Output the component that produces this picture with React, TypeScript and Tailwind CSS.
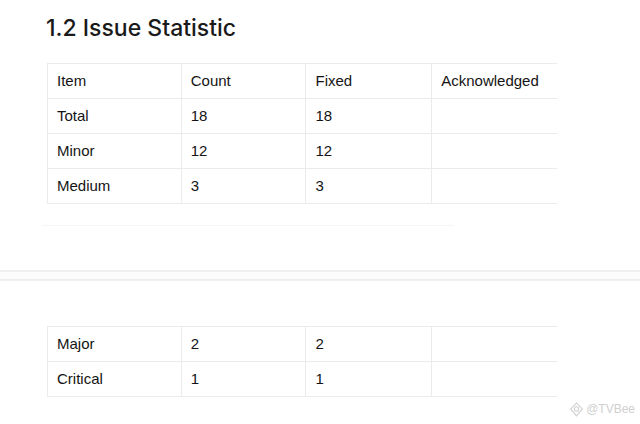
import React from "react";

const font = { fontFamily: '"Helvetica Neue", "Liberation Sans", Arial, sans-serif' };

const cols = ["w-[134px]", "w-[125px]", "w-[126px]", "w-[125px]"];

function Row({ cells }: { cells: string[] }) {
  return (
    <div className="flex">
      {cells.map((c, i) => (
        <div
          key={i}
          className={`${cols[i]} h-[35px] border-b border-[#ebebeb] ${i < 3 ? "border-r" : ""} flex items-center pl-[9px] text-[15px] text-[#141414]`}
        >
          {c}
        </div>
      ))}
    </div>
  );
}

function Table({ rows }: { rows: string[][] }) {
  return (
    <div className="w-[510px] border-l border-t border-[#ebebeb]">
      {rows.map((r, i) => (
        <Row key={i} cells={r} />
      ))}
    </div>
  );
}

export default function App() {
  return (
    <div className="relative w-[640px] h-[424px] bg-white overflow-hidden" style={font}>
      <div className="pl-[46px] pt-[12px]">
        <h1
          className="text-[23px] leading-8 font-medium text-[#1a1a1a]"
          style={{ fontFamily: 'Inter, "Liberation Sans", sans-serif' }}
        >
          1.2 Issue Statistic
        </h1>
      </div>
      <div className="pl-[47px] mt-[19px]">
        <Table
          rows={[
            ["Item", "Count", "Fixed", "Acknowledged"],
            ["Total", "18", "18", ""],
            ["Minor", "12", "12", ""],
            ["Medium", "3", "3", ""],
          ]}
        />
      </div>
      <div className="ml-[42px] mt-[21px] w-[412px] h-px bg-[#f6f6f6]" />
      <div className="mt-[44px] h-[11px] border-y-2 border-[#efefef] bg-[#fcfcfc]" />
      <div className="pl-[47px] mt-[45px]">
        <Table
          rows={[
            ["Major", "2", "2", ""],
            ["Critical", "1", "1", ""],
          ]}
        />
      </div>
      <div className="absolute right-[5px] bottom-[6px] flex items-center gap-[2px] text-[12px] text-[#cfcfcf]">
        <svg width="15" height="15" viewBox="0 0 14 14" fill="none" stroke="#d0d0d0" strokeWidth="1">
          <path d="M7 1 L12.5 6.5 L7 13 L1.5 6.5 Z" />
          <circle cx="7" cy="6.5" r="2" />
        </svg>
        <span>@TVBee</span>
      </div>
    </div>
  );
}
